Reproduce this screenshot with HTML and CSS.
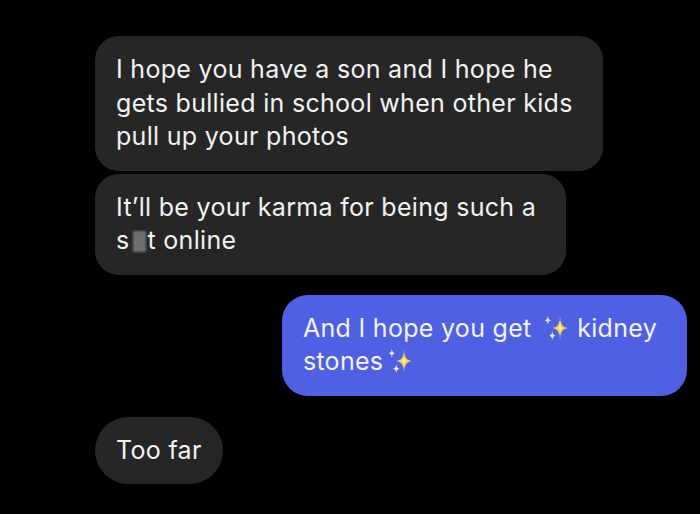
FILE: index.html
```html
<!DOCTYPE html>
<html>
<head>
<meta charset="utf-8">
<link rel="stylesheet" href="styles.css">
</head>
<body>
<div class="chat">
  <div class="bubble in b1">I hope you have a son and I hope he<br>gets bullied in school when other kids<br>pull up your photos</div>
  <div class="bubble in b2">It’ll be your karma for being such a<br>s<span class="blur"></span>t online</div>
  <div class="bubble out">And I hope you get <svg class="spark" viewBox="0 0 28 28"><path d="M19 4 Q19 14 26 14.5 Q19 15 19 25 Q19 15 12 14.5 Q19 14 19 4Z" fill="#f6d54e"/><path d="M19 10 Q19 14.5 22 14.5 Q19 14.5 19 19 Q19 14.5 16 14.5 Q19 14.5 19 10Z" fill="#fff3b0"/><path d="M8 3 Q8 7 11 7.5 Q8 8 8 12 Q8 8 5 7.5 Q8 7 8 3Z" fill="#f3d8ee"/><path d="M12 17 Q12 21 15 21.5 Q12 22 12 26 Q12 22 9 21.5 Q12 21 12 17Z" fill="#f5eef5"/></svg> kidney<br>stones<svg class="spark" viewBox="0 0 28 28"><path d="M19 4 Q19 14 26 14.5 Q19 15 19 25 Q19 15 12 14.5 Q19 14 19 4Z" fill="#f6d54e"/><path d="M19 10 Q19 14.5 22 14.5 Q19 14.5 19 19 Q19 14.5 16 14.5 Q19 14.5 19 10Z" fill="#fff3b0"/><path d="M8 3 Q8 7 11 7.5 Q8 8 8 12 Q8 8 5 7.5 Q8 7 8 3Z" fill="#f3d8ee"/><path d="M12 17 Q12 21 15 21.5 Q12 22 12 26 Q12 22 9 21.5 Q12 21 12 17Z" fill="#f5eef5"/></svg></div>
  <div class="bubble in b4">Too far</div>
</div>
</body>
</html>
```
FILE: styles.css
```css
html, body {
  margin: 0;
  padding: 0;
  background: #000;
  height: 100%;
}
.chat {
  display: flex;
  flex-direction: column;
  align-items: flex-start;
  padding: 36px 13px 0 95px;
  font-family: "Inter", "Liberation Sans", sans-serif;
  font-size: 25px;
  letter-spacing: 0.3px;
  line-height: 33.5px;
  color: #f2f2f2;
}
.bubble {
  white-space: nowrap;
  padding: 17px 30px 17px 21px;
  border-radius: 24px;
  background: #262626;
}
.b2 {
  margin-top: 3px;
}
.out {
  align-self: flex-end;
  margin-top: 20px;
  background: #5060e3;
  padding-right: 30px;
  border-radius: 26px;
}
.b4 {
  margin-top: 21px;
  border-radius: 34px;
  padding-right: 21px;
}
.blur {
  display: inline-block;
  width: 13px;
  height: 21px;
  margin: 0 2px 0 3px;
  vertical-align: -3px;
  background: #6f6f6f;
  filter: blur(1.2px);
}
.spark {
  width: 31px;
  height: 31px;
  vertical-align: -6px;
}
```
